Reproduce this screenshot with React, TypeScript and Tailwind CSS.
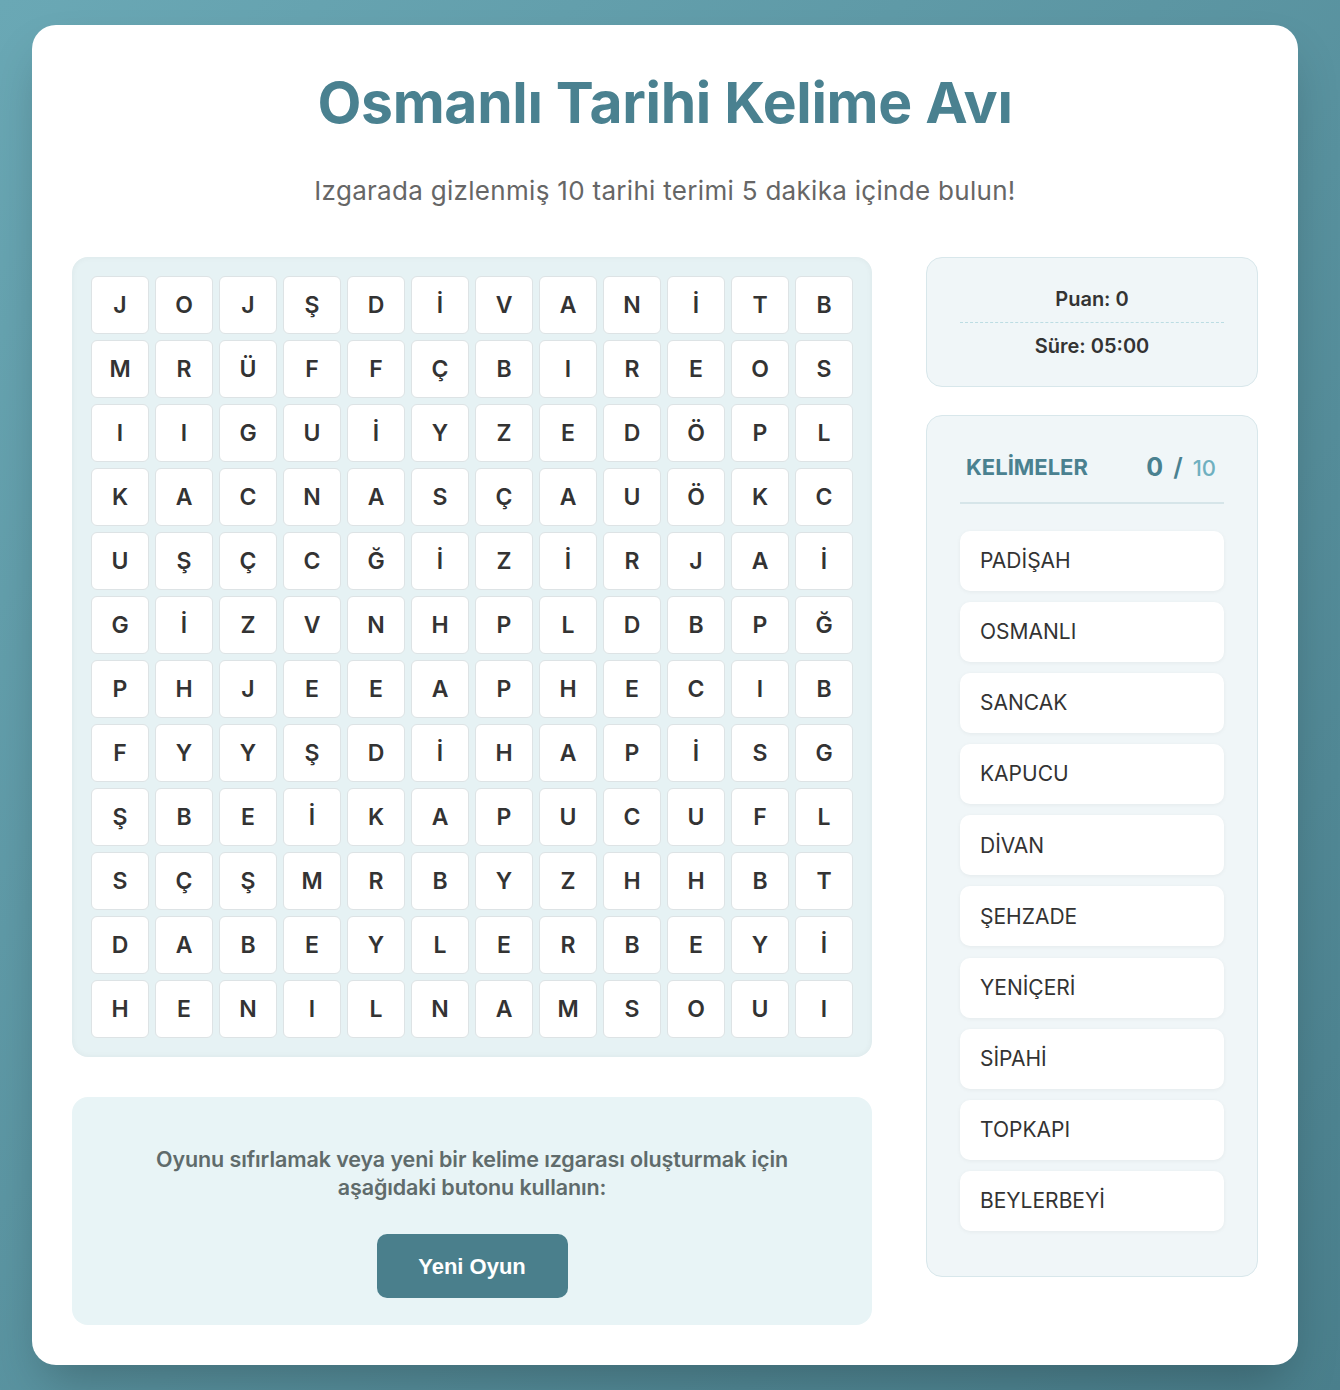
const GRID = [
  "J O J Ş D İ V A N İ T B",
  "M R Ü F F Ç B I R E O S",
  "I I G U İ Y Z E D Ö P L",
  "K A C N A S Ç A U Ö K C",
  "U Ş Ç C Ğ İ Z İ R J A İ",
  "G İ Z V N H P L D B P Ğ",
  "P H J E E A P H E C I B",
  "F Y Y Ş D İ H A P İ S G",
  "Ş B E İ K A P U C U F L",
  "S Ç Ş M R B Y Z H H B T",
  "D A B E Y L E R B E Y İ",
  "H E N I L N A M S O U I",
].map((row) => row.split(" "));

const WORDS = [
  "PADİŞAH",
  "OSMANLI",
  "SANCAK",
  "KAPUCU",
  "DİVAN",
  "ŞEHZADE",
  "YENİÇERİ",
  "SİPAHİ",
  "TOPKAPI",
  "BEYLERBEYİ",
];

export default function App() {
  return (
    <div
      className="min-h-[1390px] w-full bg-gradient-to-br from-[#6aa8b5] to-[#4a7f8c] pt-[25px] pb-[25px] pl-[32px]"
      style={{ fontFamily: "Inter, 'Noto Sans', sans-serif" }}
    >
      <div className="w-[1266px] h-[1340px] bg-white rounded-[24px] shadow-2xl px-10 pt-[46px]">
        <h1 className="text-center text-[57px] leading-[64px] font-bold text-[#4a8190] tracking-[-0.3px]">
          Osmanlı Tarihi Kelime Avı
        </h1>
        <p className="text-center text-[26px] leading-[32px] text-[#666] mt-[40px] tracking-[0.3px]">
          Izgarada gizlenmiş 10 tarihi terimi 5 dakika içinde bulun!
        </p>

        <div className="flex justify-between mt-[50px]">
          <div className="w-[800px] flex flex-col gap-[40px]">
            <div className="bg-[#e6f2f4] rounded-2xl p-[19px] shadow-[inset_0_0_6px_rgba(0,0,0,0.05)]">
              <div className="grid grid-cols-12 gap-[6px]">
                {GRID.flat().map((ch, i) => (
                  <div
                    key={i}
                    className="h-[58px] bg-white rounded-md border border-[#dde3e5] flex items-center justify-center text-[23px] font-semibold text-[#333]"
                  >
                    {ch}
                  </div>
                ))}
              </div>
            </div>

            <div className="bg-[#e8f4f6] rounded-2xl h-[228px] flex flex-col items-center pt-[48px]">
              <p className="text-center text-[21.5px] leading-[28px] font-semibold text-[#5f6b6b] w-[700px] tracking-[-0.1px]">
                Oyunu sıfırlamak veya yeni bir kelime ızgarası oluşturmak için aşağıdaki butonu kullanın:
              </p>
              <button
                className="mt-[33px] w-[191px] h-[64px] rounded-[10px] bg-[#4a7f8c] text-white text-[22px] font-bold"
                style={{ fontFamily: "'Liberation Sans', Arial, sans-serif" }}
              >
                Yeni Oyun
              </button>
            </div>
          </div>

          <div className="w-[332px] flex flex-col gap-[28px]">
            <div className="bg-[#f0f6f8] border border-[#d8e7eb] rounded-2xl h-[130px] px-[33px] flex flex-col items-center justify-center">
              <div className="text-[20px] font-semibold text-[#333] leading-[28px]">Puan: 0</div>
              <div className="w-full border-t border-dashed border-[#bcdde3] my-[9px]" />
              <div className="text-[20px] font-semibold text-[#333] leading-[28px]">Süre: 05:00</div>
            </div>

            <div className="bg-[#f0f6f8] border border-[#d8e7eb] rounded-2xl px-[33px] pt-[33px] pb-[45px]">
              <div className="flex items-center justify-between pb-[15px] border-b-2 border-[#d6e5e9]">
                <span className="text-[22px] font-bold text-[#4a8190] pl-[6px]">KELİMELER</span>
                <span className="flex items-baseline gap-[10px] pr-[8px]">
                  <span className="text-[25px] font-bold text-[#4a8190]">0</span>
                  <span className="text-[25px] font-semibold text-[#4a8190]">/</span>
                  <span className="text-[22px] font-medium text-[#6fb0c0]">10</span>
                </span>
              </div>
              <div className="flex flex-col gap-[11.2px] mt-[27px]">
                {WORDS.map((w) => (
                  <div
                    key={w}
                    className="h-[60px] bg-white rounded-[10px] shadow-[0_1px_4px_rgba(0,0,0,0.05)] flex items-center px-[20px] text-[21px] text-[#333]"
                  >
                    {w}
                  </div>
                ))}
              </div>
            </div>
          </div>
        </div>
      </div>
    </div>
  );
}
